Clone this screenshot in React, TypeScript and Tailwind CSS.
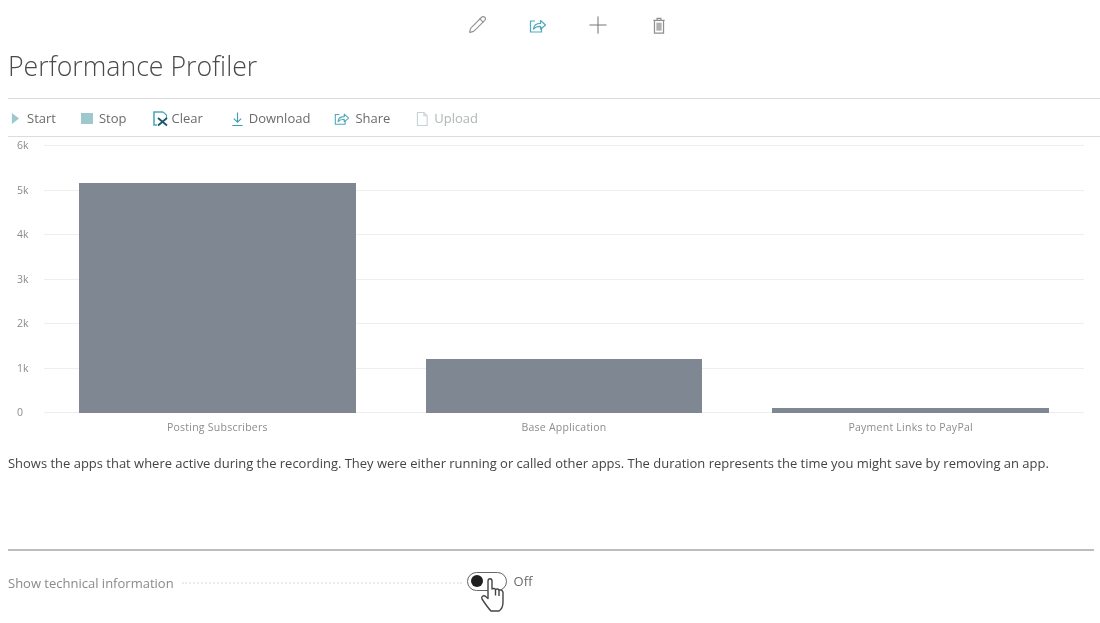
import { Pencil, Plus } from "lucide-react";

const yLabels = ["6k", "5k", "4k", "3k", "2k", "1k", "0"];

const bars = [
  { name: "Posting Subscribers", value: 5150 },
  { name: "Base Application", value: 1220 },
  { name: "Payment Links to PayPal", value: 110 },
];

const maxValue = 6000;

function ShareIcon({ className }: { className?: string }) {
  return (
    <svg viewBox="0 0 18 16" fill="none" stroke="currentColor" strokeWidth="1.2" className={className}>
      <path d="M6 3.5H1.5v11h11V10" />
      <path d="M4.5 11.5c.4-3.6 3-5.6 7-5.6V3l5 4.5-5 4.2V8.8c-3 0-5.4.8-7 2.7z" strokeLinejoin="round" />
    </svg>
  );
}

function TrashIcon() {
  return (
    <svg viewBox="0 0 14 18" fill="none" stroke="#8f8f8f" strokeWidth="1.3" className="w-[14px] h-[17px]">
      <path d="M1 3.5h12M5 3.5v-2h4v2M2.2 3.5v13.500h9.600V3.500" />
      <rect x="4.2" y="6" width="5.6" height="8.5" fill="#b0b0b0" stroke="none" />
    </svg>
  );
}

function ToolbarItem({ icon, label, muted, className }: { icon: React.ReactNode; label: string; muted?: boolean; className?: string }) {
  return (
    <div className={`flex items-center gap-[5px] ${muted ? "text-[#b0b5b5]" : "text-[#6b6b6b]"} ${className ?? ""}`}>
      {icon}
      <span>{label}</span>
    </div>
  );
}

export default function App() {
  return (
    <div className="w-[1100px] h-[623px] overflow-hidden bg-white font-['Open_Sans','Noto_Sans',sans-serif] blur-[0.6px]">
      {/* Top actions */}
      <div className="h-[50px] pt-[15px] pl-[468px] flex items-start">
        <div className="w-[61px] text-[#939393]">
          <Pencil className="w-[19px] h-[19px]" strokeWidth={1.4} />
        </div>
        <div className="w-[61px] text-[#4fa9b8]">
          <ShareIcon className="w-[18px] h-[17px] mt-[2px]" />
        </div>
        <div className="w-[62px] text-[#777777]">
          <Plus className="w-[28px] h-[28px] -ml-[6px] -mt-[4px]" strokeWidth={0.9} />
        </div>
        <div className="mt-[2px]">
          <TrashIcon />
        </div>
      </div>

      <h1 className="pl-[8px] h-[48px] text-[26.7px] leading-[32px] font-light text-[#4a4a4a]">Performance Profiler</h1>

      {/* Toolbar */}
      <div className="ml-[8px] h-[39px] pt-[2px] border-y border-[#dcdcdc] flex items-center gap-[26px] pl-[3px] text-[13px] text-[#6b6b6b]">
        <ToolbarItem
          label="Start"
          icon={
            <svg viewBox="0 0 10 12" className="w-[9px] h-[11px] mr-[2px]">
              <path d="M1 0l8 6-8 6z" fill="#9cc8ce" />
            </svg>
          }
        />
        <ToolbarItem label="Stop" className="-ml-[1px]" icon={<div className="w-[12px] h-[11px] mr-[1px] bg-[#9cc8ce]" />} />
        <ToolbarItem
          label="Clear"
          className="ml-[1px]"
          icon={
            <svg viewBox="0 0 15 16" fill="none" className="w-[15px] h-[16px] -mr-[2px]">
              <path d="M10 1H1v13h3" stroke="#4fa9b8" strokeWidth="1.6" />
              <path d="M10 1l3.500 3v3" stroke="#4fa9b8" strokeWidth="1.2" />
              <path d="M5 7l9 7.500M14 7l-9 7.500" stroke="#17566a" strokeWidth="1.8" />
            </svg>
          }
        />
        <ToolbarItem
          label="Download"
          className="ml-[2px]"
          icon={
            <svg viewBox="0 0 14 16" fill="none" stroke="#3f9fb0" strokeWidth="1.2" className="w-[13px] h-[16px]">
              <path d="M7 1v10.500M3 7.500l4 4 4-4M1.500 15h11" />
            </svg>
          }
        />
        <ToolbarItem label="Share" className="-ml-[2px]" icon={<ShareIcon className="w-[16px] h-[15px] text-[#4fa9b8]" />} />
        <ToolbarItem
          label="Upload"
          icon={
            <svg viewBox="0 0 14 16" fill="none" stroke="#c5d3d6" strokeWidth="1.2" className="w-[13px] h-[16px]">
              <path d="M1.500 1h7l3.500 3.500V15h-10.500zM8.500 1v3.500H12" />
            </svg>
          }
          muted
        />
      </div>

      {/* Chart */}
      <div className="mt-[8px] flex text-[10.5px] text-[#8c8c8c]">
        <div className="w-[36px] ml-[8px] h-[268px] flex flex-col justify-between items-start pl-[9px] leading-none">
          {yLabels.map((l) => (
            <span key={l} className="-my-[5px]">{l}</span>
          ))}
        </div>
        <div className="w-[1040px]">
          <div className="relative h-[268px] flex items-end">
            <div className="absolute inset-0 flex flex-col justify-between">
              {yLabels.map((l) => (
                <div key={l} className="h-px bg-[#eeeeee]" />
              ))}
            </div>
            {bars.map((b) => (
              <div key={b.name} className="relative flex-1 px-[35px] h-full flex items-end">
                <div className="w-full bg-[#7f8792]" style={{ height: `${(b.value / maxValue) * 100}%` }} />
              </div>
            ))}
          </div>
          <div className="flex mt-[7px] tracking-[0.25px]">
            {bars.map((b) => (
              <div key={b.name} className="flex-1 text-center">{b.name}</div>
            ))}
          </div>
        </div>
      </div>

      <p className="pl-[8px] mt-[18px] text-[12.97px] leading-[18px] text-[#444444] whitespace-nowrap">
        Shows the apps that where active during the recording. They were either running or called other apps. The duration represents the time you might save by removing an app.
      </p>

      <div className="ml-[8px] w-[1086px] mt-[77px] h-[2px] bg-[#bdbdbd]" />

      {/* Technical info toggle */}
      <div className="flex items-center pl-[8px] mt-[22px] h-[20px] text-[13px] text-[#8a8a8a]">
        <span className="whitespace-nowrap mt-[1px]">Show technical information</span>
        <div className="w-[280px] ml-[8px] mr-[5px] border-b-2 border-dotted border-[#ececec]" />
        <div className="relative flex items-center w-[40px] h-[19px] -mt-[3px] border-[1.5px] border-[#666666] rounded-full pl-[3px]">
          <div className="w-[12px] h-[12px] bg-[#1f1f1f] rounded-full" />
          <svg viewBox="0 0 25 34" className="absolute left-[12px] top-[5px] w-[25px] h-[34px]" fill="white" stroke="#444444" strokeWidth="1.4" strokeLinejoin="round">
            <path d="M8 3c0-3 4-3 4 0v8c1.500-1 3-.5 3.500.5 1.500-1 3-.5 3.500.5 2-.5 4 .5 4 2.500V24c0 4-1 7-4 9h-8C9 31 6 27 2 21c-1-2 1-4 3-3l3 2.500z" />
            <path d="M15.500 11.500v6M19 12v6" fill="none" />
          </svg>
        </div>
        <span className="ml-[7px] text-[#6b6b6b] -mt-[3px]">Off</span>
      </div>
    </div>
  );
}
